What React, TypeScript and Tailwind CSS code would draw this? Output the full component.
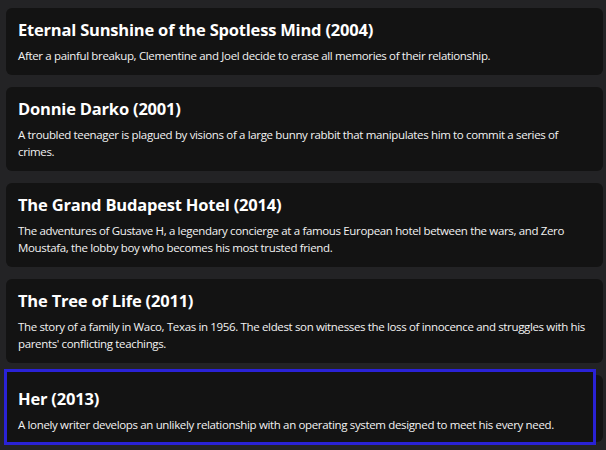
const movies = [
  { title: 'Eternal Sunshine of the Spotless Mind (2004)', text: 'After a painful breakup, Clementine and Joel decide to erase all memories of their relationship.' },
  { title: 'Donnie Darko (2001)', text: 'A troubled teenager is plagued by visions of a large bunny rabbit that manipulates him to commit a series of crimes.' },
  { title: 'The Grand Budapest Hotel (2014)', text: 'The adventures of Gustave H, a legendary concierge at a famous European hotel between the wars, and Zero Moustafa, the lobby boy who becomes his most trusted friend.' },
  { title: 'The Tree of Life (2011)', text: "The story of a family in Waco, Texas in 1956. The eldest son witnesses the loss of innocence and struggles with his parents' conflicting teachings." },
  { title: 'Her (2013)', text: 'A lonely writer develops an unlikely relationship with an operating system designed to meet his every need.' },
];

export default function App() {
  return (
    <div className="min-h-[450px] bg-[#232325] pt-2 pl-[6px] pr-[3px] pb-3 text-white" style={{ fontFamily: '"Open Sans", "Noto Sans", sans-serif' }}>
      <div className="flex flex-col gap-3">
        {movies.map((m, i) => {
          const active = i === movies.length - 1;
          return (
            <div key={m.title} className="relative rounded-md bg-[#131313] px-3 pt-[10px] pb-[11px]">
              {active && <div className="absolute -left-[2px] -top-[6px] right-[7px] -bottom-[3px] border-[3px] border-[#2a22d6] bg-[#131313]" />}
              <div className={active ? 'relative translate-y-[2px]' : 'relative'}>
                <h2 className="text-[16.5px] font-bold leading-[24px] tracking-[-0.2px]">{m.title}</h2>
                <p className="mt-[5px] text-[11.5px] leading-[17px] text-[#f2f2f2] tracking-[-0.35px]">{m.text}</p>
              </div>
            </div>
          );
        })}
      </div>
    </div>
  );
}
